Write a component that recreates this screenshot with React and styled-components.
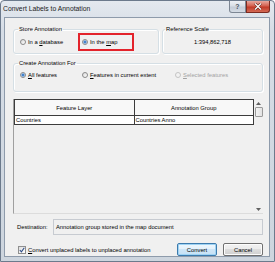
import React from "react";
import styled, { createGlobalStyle } from "styled-components";

const GlobalStyle = createGlobalStyle`
  html, body {
    margin: 0;
    padding: 0;
    background: #ffffff;
  }
  body {
    font-family: "Liberation Sans", Arial, sans-serif;
    font-size: 5.8px;
    color: #000;
  }
`;

const Window = styled.div`
  width: 275px;
  height: 262px;
  box-sizing: border-box;
  border: 1px solid #6c7a8c;
  border-radius: 4px 4px 0 0;
  background: linear-gradient(#e4e9ef, #d6dde6 30px, #cdd5de);
  display: flex;
  flex-direction: column;
`;

const TitleBar = styled.div`
  height: 16px;
  display: flex;
  align-items: flex-start;
  justify-content: space-between;
  padding: 0 4px 0 2px;
`;

const Title = styled.span`
  font-size: 6.8px;
  line-height: 16px;
  color: #1b1b1b;
`;

const Caption = styled.div`
  display: flex;
`;

const CaptionButton = styled.div`
  width: ${(p) => (p.close ? 24 : 17)}px;
  height: 12px;
  box-sizing: border-box;
  border: 1px solid ${(p) => (p.close ? "#7c2b21" : "#7d8794")};
  border-top: none;
  border-radius: ${(p) => (p.close ? "0 0 3px 0" : "0 0 0 3px")};
  background: ${(p) =>
    p.close
      ? "linear-gradient(#e8a89f, #d3604f 45%, #c23a28 55%, #d36a55)"
      : "linear-gradient(#eef1f5, #d9dfe7 45%, #c4ccd7 55%, #d5dce5)"};
  display: flex;
  align-items: center;
  justify-content: center;
  font-size: 7px;
  font-weight: bold;
  color: ${(p) => (p.close ? "#fff" : "#4a5563")};
`;

const Client = styled.div`
  flex: 1;
  margin: 0 4px 4px 3px;
  border: 1px solid #8e9bab;
  background: #f0f0f0;
  display: flex;
  flex-direction: column;
  padding: 0 6px 0 8px;
`;

const TopRow = styled.div`
  display: flex;
  gap: 3px;
  margin-top: 8px;
`;

const Group = styled.fieldset`
  margin: ${(p) => p.mt || 0}px 0 0 0;
  box-sizing: border-box;
  height: ${(p) => p.h}px;
  width: ${(p) => (p.w ? `${p.w}px` : "auto")};
  flex: ${(p) => (p.w ? "none" : 1)};
  border: 1px solid #d5dfe5;
  border-radius: 3px;
  box-shadow: inset 1px 1px 0 #fff, 1px 1px 0 #fff;
  padding: ${(p) => p.pad || "5px 6px 0 6px"};
  min-width: 0;
`;

const Legend = styled.legend`
  padding: 0 1px;
  margin-left: -2px;
  line-height: 7px;
`;

const OptionRow = styled.div`
  display: grid;
  grid-template-columns: 62px 93px 1fr;
  align-items: center;
  justify-items: start;
  height: 8px;
`;

const Option = styled.label`
  position: relative;
  display: flex;
  align-items: center;
  gap: 2px;
  color: ${(p) => (p.disabled ? "#a3a3a3" : "#000")};
  white-space: nowrap;
  ${(p) =>
    p.highlight &&
    `
    &::after {
      content: "";
      position: absolute;
      left: -4px;
      right: -17px;
      top: -6px;
      bottom: -6px;
      border: 2px solid #e3232b;
    }
  `}
`;

const RadioDot = styled.span`
  width: 6px;
  height: 6px;
  box-sizing: border-box;
  border-radius: 50%;
  border: 1px solid ${(p) => (p.disabled ? "#c4c4c4" : "#8a8a8a")};
  background: ${(p) =>
    p.checked
      ? "radial-gradient(circle, #2a69b8 0, #5d9be0 1.4px, #dce6ef 1.8px, #f6f6f6 3px)"
      : p.disabled
      ? "#f2f2f2"
      : "linear-gradient(135deg, #d9d9d9, #ffffff)"};
`;

const ScaleValue = styled.div`
  display: flex;
  justify-content: center;
  height: 8px;
  align-items: center;
`;

const Grid = styled.div`
  margin-top: 7px;
  height: 115px;
  box-sizing: border-box;
  border-left: 1px solid #a0a0a0;
  border-bottom: 1px solid #dcdcdc;
  display: flex;
`;

const GridBody = styled.div`
  flex: 1;
  display: flex;
  flex-direction: column;
`;

const GridRow = styled.div`
  display: grid;
  grid-template-columns: 1fr 1fr;
  height: ${(p) => p.h}px;
`;

const Cell = styled.div`
  border: 1px solid #3c3c3c;
  margin: 0 -1px -1px 0;
  background: ${(p) => (p.header ? "#f8f8f8" : "#fff")};
  display: flex;
  align-items: center;
  justify-content: ${(p) => (p.header ? "center" : "flex-start")};
  padding-left: ${(p) => (p.header ? 0 : 1)}px;
  white-space: nowrap;
  overflow: hidden;
`;

const ScrollBar = styled.div`
  width: 9px;
  margin-left: 1px;
  display: flex;
  flex-direction: column;
  align-items: center;
  background: #f0f0f0;
`;

const Arrow = styled.div`
  height: 8px;
  display: flex;
  align-items: center;
  justify-content: center;
  margin-top: ${(p) => (p.down ? "auto" : 0)};
`;

const Thumb = styled.div`
  width: 8px;
  height: 10px;
  box-sizing: border-box;
  border: 1px solid #9a9a9a;
  border-radius: 1px;
  background: linear-gradient(90deg, #f4f4f4, #e2e2e2);
`;

const DestRow = styled.div`
  display: flex;
  align-items: center;
  margin-top: 5px;
  height: 16px;
`;

const DestLabel = styled.span`
  width: 36px;
  padding-left: 4px;
`;

const DestField = styled.div`
  flex: 1;
  height: 16px;
  box-sizing: border-box;
  border: 1px solid #c7cbd1;
  background: #f0f0f0;
  display: flex;
  align-items: center;
  padding-left: 2px;
  white-space: nowrap;
`;

const BottomRow = styled.div`
  display: flex;
  align-items: center;
  margin-top: 8px;
  height: 13px;
  padding-left: 5px;
`;

const CheckLabel = styled.label`
  display: flex;
  align-items: center;
  gap: 2px;
  flex: 1;
  white-space: nowrap;
`;

const CheckBox = styled.span`
  width: 8px;
  height: 8px;
  box-sizing: border-box;
  border: 1px solid #8f8f8f;
  background: linear-gradient(135deg, #dedede, #ffffff);
  display: flex;
  align-items: center;
  justify-content: center;
`;

const Button = styled.button`
  width: 40px;
  height: 13px;
  margin-left: ${(p) => (p.first ? 0 : 6)}px;
  box-sizing: border-box;
  font: inherit;
  padding: 0;
  border: 1px solid ${(p) => (p.primary ? "#3d7bad" : "#707070")};
  border-radius: 2px;
  background: ${(p) =>
    p.primary
      ? "linear-gradient(#eef7fd, #e3f1fb 50%, #cfe6f7 50%, #c6e1f5)"
      : "linear-gradient(#f2f2f2, #ebebeb 50%, #dddddd 50%, #cfcfcf)"};
  box-shadow: inset 0 0 0 1px ${(p) => (p.primary ? "#9fd3f4" : "#fcfcfc")};
  color: #000;
`;

export default function App() {
  return (
    <>
      <GlobalStyle />
      <Window>
        <TitleBar>
          <Title>Convert Labels to Annotation</Title>
          <Caption>
            <CaptionButton>?</CaptionButton>
            <CaptionButton close>
              <svg width="8" height="7" viewBox="0 0 8 7">
                <path d="M1 0.5 L7 6.5 M7 0.5 L1 6.5" stroke="#5a1d15" strokeWidth="2.4" />
                <path d="M1 0.5 L7 6.5 M7 0.5 L1 6.5" stroke="#fff" strokeWidth="1.3" />
              </svg>
            </CaptionButton>
          </Caption>
        </TitleBar>
        <Client>
          <TopRow>
            <Group w={146} h={28}>
              <Legend>Store Annotation</Legend>
              <OptionRow>
                <Option>
                  <RadioDot />
                  <span>In a <u>d</u>atabase</span>
                </Option>
                <Option highlight>
                  <RadioDot checked />
                  <span>In the <u>m</u>ap</span>
                </Option>
              </OptionRow>
            </Group>
            <Group h={28} pad="5px 4px 0 4px">
              <Legend>Reference Scale</Legend>
              <ScaleValue>1:394,862,718</ScaleValue>
            </Group>
          </TopRow>
          <Group h={26} pad="4px 6px 0 6px" mt={6}>
            <Legend>Create Annotation For</Legend>
            <OptionRow>
              <Option>
                <RadioDot checked />
                <span><u>A</u>ll features</span>
              </Option>
              <Option>
                <RadioDot />
                <span><u>F</u>eatures in current extent</span>
              </Option>
              <Option disabled>
                <RadioDot disabled />
                <span><u>S</u>elected features</span>
              </Option>
            </OptionRow>
          </Group>
          <Grid>
            <GridBody>
              <GridRow h={16}>
                <Cell header>Feature Layer</Cell>
                <Cell header>Annotation Group</Cell>
              </GridRow>
              <GridRow h={9}>
                <Cell>Countries</Cell>
                <Cell>Countries Anno</Cell>
              </GridRow>
            </GridBody>
            <ScrollBar>
              <Arrow>
                <svg width="5" height="3" viewBox="0 0 5 3">
                  <path d="M0 3 L2.5 0 L5 3 Z" fill="#606060" />
                </svg>
              </Arrow>
              <Thumb />
              <Arrow down>
                <svg width="5" height="3" viewBox="0 0 5 3">
                  <path d="M0 0 L2.5 3 L5 0 Z" fill="#606060" />
                </svg>
              </Arrow>
            </ScrollBar>
          </Grid>
          <DestRow>
            <DestLabel>Destination:</DestLabel>
            <DestField>Annotation group stored in the map document</DestField>
          </DestRow>
          <BottomRow>
            <CheckLabel>
              <CheckBox>
                <svg width="6" height="6" viewBox="0 0 6 6">
                  <path d="M0.8 3 L2.4 4.8 L5.3 0.8" stroke="#2b4a86" strokeWidth="1.1" fill="none" />
                </svg>
              </CheckBox>
              <span><u>C</u>onvert unplaced labels to unplaced annotation</span>
            </CheckLabel>
            <Button primary first>Convert</Button>
            <Button>Cancel</Button>
          </BottomRow>
        </Client>
      </Window>
    </>
  );
}
